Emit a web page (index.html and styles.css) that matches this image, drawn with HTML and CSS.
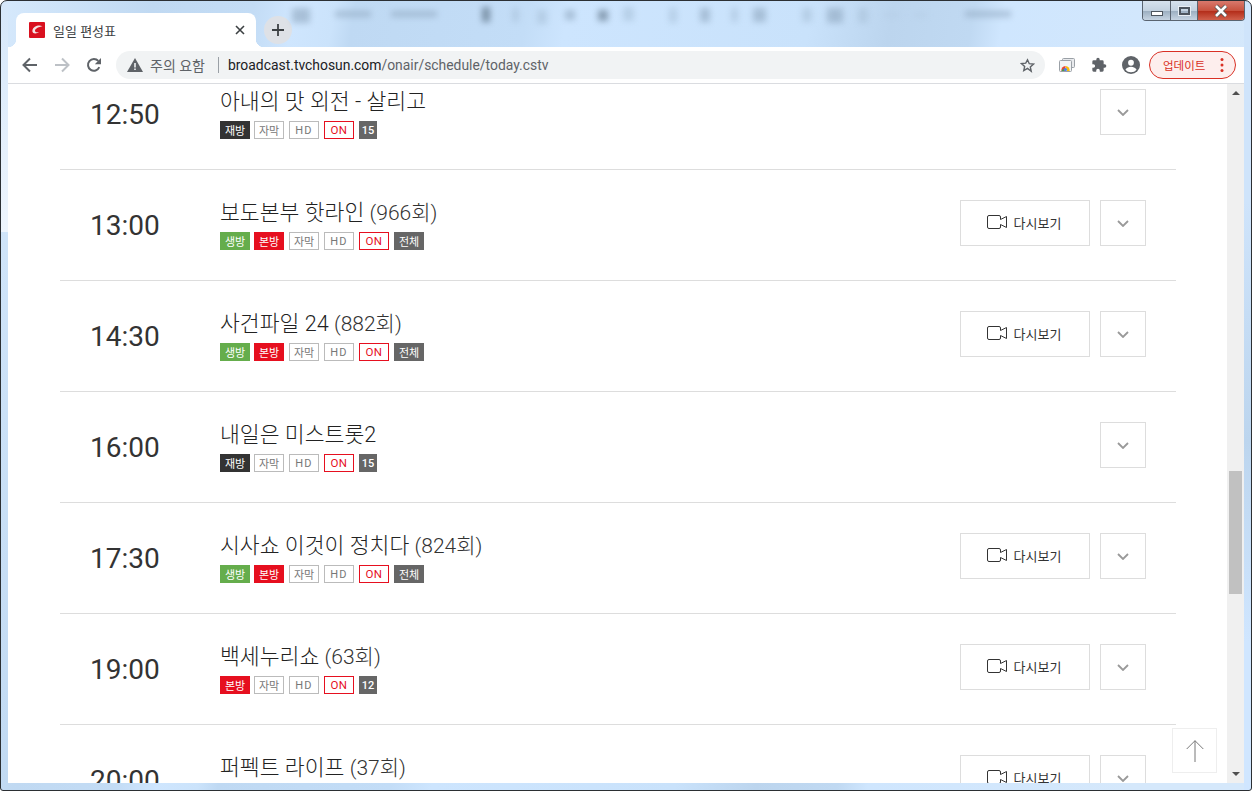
FILE: index.html
```html
<!DOCTYPE html>
<html lang="ko">

<head>
    <meta charset="UTF-8">
    <title>일일 편성표</title>
    <link rel="stylesheet" href="styles.css">
</head>

<body>
    <div class="window">
        <div class="blur-strip"></div>

        <div class="win-controls">
            <div class="win-btn win-min"><span></span></div>
            <div class="win-btn win-max"><span></span></div>
            <div class="win-btn win-close">
                <svg width="18" height="14" viewBox="0 0 18 14">
                    <path d="M4 2l10 10M14 2L4 12" stroke="#555" stroke-width="4.4" fill="none" />
                    <path d="M4 2l10 10M14 2L4 12" stroke="#fff" stroke-width="2.6" fill="none" />
                </svg>
            </div>
        </div>

        <div class="tab-strip">
            <div class="tab">
                <svg class="favicon" width="16" height="16" viewBox="0 0 16 16">
                    <rect width="16" height="16" rx="1" fill="#d9101f" />
                    <path d="M13.5 4.2C10 2.4 4.2 4 3.4 8.4 2.9 11.400 6.800 12.800 10.500 9.800 8 10.800 5.800 10.300 6 8.500 6.300 6.300 10 4.900 13.500 4.200Z" fill="#f3e3e3" />
                </svg>
                <span class="tab-title">일일 편성표</span>
                <svg class="tab-close" width="10" height="10" viewBox="0 0 10 10">
                    <path d="M1 1l8 8M9 1L1 9" stroke="#3c4043" stroke-width="1.600" />
                </svg>
            </div>
            <div class="new-tab">
                <svg width="14" height="14" viewBox="0 0 14 14">
                    <path d="M7 1v12M1 7h12" stroke="#3c4043" stroke-width="1.800" />
                </svg>
            </div>
        </div>

        <div class="toolbar">
            <svg class="tool back" width="16" height="16" viewBox="0 0 16 16">
                <path d="M15 8H2M8 1.500L1.500 8 8 14.500" stroke="#5f6368" stroke-width="2" fill="none" />
            </svg>
            <svg class="tool forward" width="16" height="16" viewBox="0 0 16 16">
                <path d="M1 8h13M8 1.500L14.500 8 8 14.500" stroke="#bdc1c6" stroke-width="2" fill="none" />
            </svg>
            <svg class="tool reload" width="16" height="16" viewBox="0 0 16 16">
                <path d="M13.300 10.200A5.900 5.900 0 1 1 12.300 3.900" stroke="#5f6368" stroke-width="2" fill="none" />
                <path d="M15 1v6.200H8.800z" fill="#5f6368" />
            </svg>

            <div class="omnibox">
                <svg class="warn" width="16" height="14" viewBox="0 0 16 14">
                    <path d="M8 0L16 14H0z" fill="#5f6368" />
                    <path d="M7.200 5h1.600v4.500H7.200zM7.200 10.500h1.600V12H7.200z" fill="#f1f3f4" />
                </svg>
                <span class="warn-text">주의 요함</span>
                <span class="omni-sep"></span>
                <span class="url">broadcast.tvchosun.com<span class="url-path">/onair/schedule/today.cstv</span></span>
                <svg class="star" width="15" height="15" viewBox="0 0 24 24">
                    <path d="M12 2.800l2.800 6.300 6.900.7-5.200 4.600 1.500 6.800L12 16.700l-6 3.500 1.500-6.800-5.200-4.600 6.900-.7z" stroke="#5f6368" stroke-width="2.200" fill="none" />
                </svg>
            </div>

            <svg class="ext-cast" width="16" height="14" viewBox="0 0 16 14">
                <rect x="3.500" y="0.500" width="12" height="9" rx="1" fill="#e8eaed" stroke="#9aa0a6" />
                <rect x="0.500" y="2.500" width="12" height="11" rx="1" fill="#f1f3f4" stroke="#9aa0a6" />
                <path d="M2.500 13a4 4 0 0 1 4-5v5z" fill="#ea4335" />
                <path d="M6.500 8a4 4 0 0 1 4 5H8z" fill="#fbbc04" />
                <path d="M2.500 13h2l1-1-1-1.500z" fill="#34a853" />
                <circle cx="6.500" cy="11.500" r="1.600" fill="#4285f4" />
            </svg>
            <svg class="ext-puzzle" width="16" height="16" viewBox="0 0 24 24">
                <path d="M20.500 11H19V7a2 2 0 0 0-2-2h-4V3.500a2.500 2.500 0 0 0-5 0V5H4a2 2 0 0 0-2 2v3.800h1.500a2.700 2.700 0 0 1 0 5.400H2V20a2 2 0 0 0 2 2h3.800v-1.500a2.700 2.700 0 0 1 5.400 0V22H17a2 2 0 0 0 2-2v-4h1.500a2.500 2.500 0 0 0 0-5z" fill="#5f6368" />
            </svg>
            <svg class="profile" width="18" height="18" viewBox="0 0 20 20">
                <circle cx="10" cy="10" r="10" fill="#5f6368" />
                <circle cx="10" cy="7.500" r="3.200" fill="#fff" />
                <path d="M3.800 15.200c1.500-2.400 3.900-3.300 6.200-3.300s4.700.9 6.200 3.300A8 8 0 0 1 10 18a8 8 0 0 1-6.200-2.800z" fill="#fff" />
            </svg>
            <div class="update-btn">
                <span>업데이트</span>
                <svg width="4" height="16" viewBox="0 0 4 16">
                    <circle cx="2" cy="2.500" r="1.500" fill="#d93025" />
                    <circle cx="2" cy="8" r="1.500" fill="#d93025" />
                    <circle cx="2" cy="13.500" r="1.500" fill="#d93025" />
                </svg>
            </div>
        </div>

        <div class="viewport">
            <div class="page">
                <ul class="schedule">
                    <li class="row">
                        <div class="time">12:50</div>
                        <div class="info">
                            <div class="title">아내의 맛 외전 - 살리고</div>
                            <div class="badges">
                                <span class="badge dark">재방</span>
                                <span class="badge line">자막</span>
                                <span class="badge line en">HD</span>
                                <span class="badge on">ON</span>
                                <span class="badge age">15</span>
                            </div>
                        </div>
                        <div class="actions">
                            <a class="more"><svg width="12" height="7" viewBox="0 0 12 7"><path d="M1 1l5 5 5-5" stroke="#999" stroke-width="1.800" fill="none" /></svg></a>
                        </div>
                    </li>
                    <li class="row">
                        <div class="time">13:00</div>
                        <div class="info">
                            <div class="title">보도본부 핫라인 <span class="count">(966회)</span></div>
                            <div class="badges">
                                <span class="badge live">생방</span>
                                <span class="badge first">본방</span>
                                <span class="badge line">자막</span>
                                <span class="badge line en">HD</span>
                                <span class="badge on">ON</span>
                                <span class="badge all">전체</span>
                            </div>
                        </div>
                        <div class="actions">
                            <a class="replay"><svg width="20" height="14" viewBox="0 0 20 14"><path d="M2 .5h10a1.500 1.500 0 0 1 1.500 1.500v2.500l6-3v11l-6-3V12a1.500 1.500 0 0 1-1.500 1.500H2A1.500 1.500 0 0 1 .5 12V2A1.500 1.500 0 0 1 2 .5z" stroke="#333" fill="none" /></svg>다시보기</a>
                            <a class="more"><svg width="12" height="7" viewBox="0 0 12 7"><path d="M1 1l5 5 5-5" stroke="#999" stroke-width="1.800" fill="none" /></svg></a>
                        </div>
                    </li>
                    <li class="row">
                        <div class="time">14:30</div>
                        <div class="info">
                            <div class="title">사건파일 24 <span class="count">(882회)</span></div>
                            <div class="badges">
                                <span class="badge live">생방</span>
                                <span class="badge first">본방</span>
                                <span class="badge line">자막</span>
                                <span class="badge line en">HD</span>
                                <span class="badge on">ON</span>
                                <span class="badge all">전체</span>
                            </div>
                        </div>
                        <div class="actions">
                            <a class="replay"><svg width="20" height="14" viewBox="0 0 20 14"><path d="M2 .5h10a1.500 1.500 0 0 1 1.500 1.500v2.500l6-3v11l-6-3V12a1.500 1.500 0 0 1-1.500 1.500H2A1.500 1.500 0 0 1 .5 12V2A1.500 1.500 0 0 1 2 .5z" stroke="#333" fill="none" /></svg>다시보기</a>
                            <a class="more"><svg width="12" height="7" viewBox="0 0 12 7"><path d="M1 1l5 5 5-5" stroke="#999" stroke-width="1.800" fill="none" /></svg></a>
                        </div>
                    </li>
                    <li class="row">
                        <div class="time">16:00</div>
                        <div class="info">
                            <div class="title">내일은 미스트롯2</div>
                            <div class="badges">
                                <span class="badge dark">재방</span>
                                <span class="badge line">자막</span>
                                <span class="badge line en">HD</span>
                                <span class="badge on">ON</span>
                                <span class="badge age">15</span>
                            </div>
                        </div>
                        <div class="actions">
                            <a class="more"><svg width="12" height="7" viewBox="0 0 12 7"><path d="M1 1l5 5 5-5" stroke="#999" stroke-width="1.800" fill="none" /></svg></a>
                        </div>
                    </li>
                    <li class="row">
                        <div class="time">17:30</div>
                        <div class="info">
                            <div class="title">시사쇼 이것이 정치다 <span class="count">(824회)</span></div>
                            <div class="badges">
                                <span class="badge live">생방</span>
                                <span class="badge first">본방</span>
                                <span class="badge line">자막</span>
                                <span class="badge line en">HD</span>
                                <span class="badge on">ON</span>
                                <span class="badge all">전체</span>
                            </div>
                        </div>
                        <div class="actions">
                            <a class="replay"><svg width="20" height="14" viewBox="0 0 20 14"><path d="M2 .5h10a1.500 1.500 0 0 1 1.500 1.500v2.500l6-3v11l-6-3V12a1.500 1.500 0 0 1-1.500 1.500H2A1.500 1.500 0 0 1 .5 12V2A1.500 1.500 0 0 1 2 .5z" stroke="#333" fill="none" /></svg>다시보기</a>
                            <a class="more"><svg width="12" height="7" viewBox="0 0 12 7"><path d="M1 1l5 5 5-5" stroke="#999" stroke-width="1.800" fill="none" /></svg></a>
                        </div>
                    </li>
                    <li class="row">
                        <div class="time">19:00</div>
                        <div class="info">
                            <div class="title">백세누리쇼 <span class="count">(63회)</span></div>
                            <div class="badges">
                                <span class="badge first">본방</span>
                                <span class="badge line">자막</span>
                                <span class="badge line en">HD</span>
                                <span class="badge on">ON</span>
                                <span class="badge age">12</span>
                            </div>
                        </div>
                        <div class="actions">
                            <a class="replay"><svg width="20" height="14" viewBox="0 0 20 14"><path d="M2 .5h10a1.500 1.500 0 0 1 1.500 1.500v2.500l6-3v11l-6-3V12a1.500 1.500 0 0 1-1.500 1.500H2A1.500 1.500 0 0 1 .5 12V2A1.500 1.500 0 0 1 2 .5z" stroke="#333" fill="none" /></svg>다시보기</a>
                            <a class="more"><svg width="12" height="7" viewBox="0 0 12 7"><path d="M1 1l5 5 5-5" stroke="#999" stroke-width="1.800" fill="none" /></svg></a>
                        </div>
                    </li>
                    <li class="row">
                        <div class="time">20:00</div>
                        <div class="info">
                            <div class="title">퍼펙트 라이프 <span class="count">(37회)</span></div>
                        </div>
                        <div class="actions">
                            <a class="replay"><svg width="20" height="14" viewBox="0 0 20 14"><path d="M2 .5h10a1.500 1.500 0 0 1 1.500 1.500v2.500l6-3v11l-6-3V12a1.500 1.500 0 0 1-1.500 1.500H2A1.500 1.500 0 0 1 .5 12V2A1.500 1.500 0 0 1 2 .5z" stroke="#333" fill="none" /></svg>다시보기</a>
                            <a class="more"><svg width="12" height="7" viewBox="0 0 12 7"><path d="M1 1l5 5 5-5" stroke="#999" stroke-width="1.800" fill="none" /></svg></a>
                        </div>
                    </li>
                </ul>
            </div>

            <a class="to-top">
                <svg width="18" height="22" viewBox="0 0 18 22">
                    <path d="M9 .7V22M.7 9L9 .7 17.300 9" stroke="#777" fill="none" />
                </svg>
            </a>

            <div class="scrollbar">
                <div class="arrow-up"></div>
                <div class="thumb"></div>
                <div class="arrow-down"></div>
            </div>
        </div>
    </div>
</body>

</html>
```

FILE: styles.css
```css
html,
body {
    margin: 0;
    height: 100%;
    overflow: hidden;
}

body {
    font-family: Roboto, "Noto Sans CJK KR", sans-serif;
    color: #333;
}

ul {
    list-style: none;
    margin: 0;
    padding: 0;
}

.window {
    position: relative;
    width: 1252px;
    height: 791px;
    box-sizing: border-box;
    padding: 0 7px 7px;
    display: flex;
    flex-direction: column;
    border: 1px solid #2b2f33;
    border-radius: 7px 7px 3px 3px;
    background:
        linear-gradient(#d5e7fa, #eef5fd) 0 0 / 7px 231px no-repeat,
        linear-gradient(#cfe4fb 0, #cfe4fb 200px, #bcd5ee 440px, #d0e6ff 640px) right 0 / 7px 100% no-repeat,
        linear-gradient(100deg, #d6e9fc 0, #c0d9f2 150px, #c3dcf5 250px, #cfe6fe 290px, #cbe3fb 330px, #bfd9f3 350px, #c3ddf7 520px, #cde5fe 560px, #c9e2fb 800px, #bcd5ee 880px, #c0d9f2 960px, #cfe6fe 990px, #d5e8fb 1252px);
    overflow: hidden;
}

/* blurred desktop behind the glass title bar */
.blur-strip {
    position: absolute;
    top: 0;
    left: 280px;
    width: 740px;
    height: 30px;
    filter: blur(3px);
    opacity: .6;
    background:
        linear-gradient(#8fa7bf, #8fa7bf) 11px 7px / 18px 15px no-repeat,
        linear-gradient(#8fa7bf, #8fa7bf) 54px 10px / 36px 6px no-repeat,
        linear-gradient(#8fa7bf, #8fa7bf) 110px 10px / 46px 6px no-repeat,
        linear-gradient(#4d6275, #4d6275) 201px 6px / 8px 15px no-repeat,
        linear-gradient(#a9c2da, #a9c2da) 231px 7px / 7px 14px no-repeat,
        linear-gradient(#a9c2da, #a9c2da) 256px 9px / 10px 14px no-repeat,
        linear-gradient(#8fa7bf, #8fa7bf) 284px 9px / 10px 10px no-repeat,
        linear-gradient(#5a6f83, #5a6f83) 317px 9px / 10px 11px no-repeat,
        linear-gradient(#a9c2da, #a9c2da) 342px 6px / 11px 14px no-repeat,
        linear-gradient(#a9c2da, #a9c2da) 388px 7px / 8px 15px no-repeat,
        linear-gradient(#8fa7bf, #8fa7bf) 419px 7px / 10px 14px no-repeat,
        linear-gradient(#a9c2da, #a9c2da) 450px 7px / 7px 14px no-repeat,
        linear-gradient(#8fa7bf, #8fa7bf) 472px 7px / 13px 14px no-repeat,
        linear-gradient(#a9c2da, #a9c2da) 521px 7px / 10px 14px no-repeat,
        linear-gradient(#8fa7bf, #8fa7bf) 546px 7px / 16px 15px no-repeat,
        linear-gradient(#a9c2da, #a9c2da) 577px 7px / 10px 15px no-repeat,
        linear-gradient(#b3cbe3, #b3cbe3) 603px 12px / 15px 4px no-repeat,
        linear-gradient(#b3cbe3, #b3cbe3) 633px 12px / 13px 4px no-repeat,
        linear-gradient(#8fa7bf, #8fa7bf) 684px 10px / 46px 6px no-repeat;
}

.win-controls {
    position: absolute;
    top: 0;
    right: 6px;
    display: flex;
    height: 19px;
    border: 1px solid #5a6470;
    border-top: 0;
    border-radius: 0 0 4px 4px;
    overflow: hidden;
}

.win-btn {
    display: flex;
    align-items: center;
    justify-content: center;
    background: linear-gradient(#d6e2ee 0%, #c3d2e0 50%, #9aadbf 51%, #c6d4e2 100%);
    border-right: 1px solid #5a6470;
}

.win-min {
    width: 27px;
}

.win-min span {
    width: 10px;
    height: 3px;
    margin-top: 5px;
    background: #fff;
    border: 1px solid #4d555e;
}

.win-max {
    width: 26px;
}

.win-max span {
    width: 7px;
    height: 4px;
    border: 2px solid #4d555e;
    outline: 1px solid #e8eef4;
}

.win-close {
    width: 46px;
    border-right: 0;
    background: linear-gradient(#d8796d 0%, #c8523f 50%, #b22a17 51%, #d0604c 100%);
}

.tab-strip {
    height: 46px;
    display: flex;
    align-items: flex-start;
    flex-shrink: 0;
}

.tab {
    position: relative;
    width: 240px;
    height: 34px;
    margin-top: 12px;
    margin-left: 8px;
    padding: 0 11px 0 13px;
    box-sizing: border-box;
    display: flex;
    align-items: center;
    background: #fff;
    border-radius: 8px 8px 0 0;
}

/* flared bottom corners of the active tab */
.tab::before,
.tab::after {
    content: "";
    position: absolute;
    bottom: 0;
    width: 8px;
    height: 8px;
}

.tab::before {
    left: -8px;
    background: radial-gradient(circle at 0 0, transparent 8px, #fff 8.500px);
}

.tab::after {
    right: -8px;
    background: radial-gradient(circle at 100% 0, transparent 8px, #fff 8.500px);
}

.tab-title {
    flex: 1;
    margin-left: 8px;
    font-size: 13px;
    color: #3c4043;
}

.new-tab {
    width: 28px;
    height: 28px;
    margin: 15px 0 0 8px;
    border-radius: 50%;
    background: #dee1e6;
    display: flex;
    align-items: center;
    justify-content: center;
}

.toolbar {
    height: 36px;
    flex-shrink: 0;
    display: flex;
    align-items: center;
    background: #fff;
    border-bottom: 1px solid #dadce0;
}

.tool {
    flex-shrink: 0;
}

.back {
    margin-left: 14px;
}

.forward {
    margin-left: 16px;
}

.reload {
    margin-left: 16px;
}

.omnibox {
    width: 929px;
    height: 28px;
    margin-left: 14px;
    padding: 0 10px 0 11px;
    box-sizing: border-box;
    display: flex;
    align-items: center;
    border-radius: 14px;
    background: #f1f3f4;
    font-size: 14px;
    color: #5f6368;
}

.warn-text {
    margin-left: 7px;
    font-size: 14px;
}

.omni-sep {
    width: 1px;
    height: 16px;
    margin: 0 9px 0 13px;
    background: #9aa0a6;
}

.url {
    flex: 1;
    font-size: 13.900px;
    color: #202124;
}

.url-path {
    color: #5f6368;
}

.ext-cast {
    margin-left: 14px;
}

.ext-puzzle {
    margin-left: 16px;
}

.profile {
    margin-left: 15px;
}

.update-btn {
    width: 87px;
    height: 28px;
    margin-left: 9px;
    box-sizing: border-box;
    padding: 0 11px 0 13px;
    display: flex;
    align-items: center;
    justify-content: space-between;
    border: 1px solid #d93025;
    border-radius: 14px;
    background: #fdeeed;
    font-size: 11.500px;
    color: #d93025;
}

.viewport {
    position: relative;
    flex: 1;
    min-height: 0;
    background: #fff;
    overflow: hidden;
    display: flex;
}

.page {
    flex: 1;
    min-width: 0;
    padding: 0 51px 0 52px;
}

.schedule {
    margin-top: -25px;
}

.row {
    height: 111px;
    box-sizing: border-box;
    display: flex;
    border-bottom: 1px solid #ddd;
}

.time {
    width: 160px;
    flex-shrink: 0;
    padding-left: 30px;
    box-sizing: border-box;
    font-size: 28px;
    line-height: 112px;
}

.info {
    flex: 1;
    padding-top: 29px;
}

.title {
    font-size: 21.600px;
    line-height: 28px;
    font-weight: 300;
    color: #222;
}

.count {
    font-size: 21px;
    color: #333;
}

.badges {
    display: flex;
    margin-top: 5px;
}

.badge {
    width: 30px;
    height: 18px;
    box-sizing: border-box;
    margin-right: 5px;
    display: flex;
    align-items: center;
    justify-content: center;
    font-size: 11px;
    color: #fff;
}

.badge:first-child {
    margin-right: 4px;
}

.dark { background: #333; }
.live { background: #65ad4c; }
.first { background: #e60f1f; }
.all { background: #666; }

.age {
    width: 18px;
    background: #666;
    font-weight: 500;
}

.line {
    border: 1px solid #bbb;
    color: #777;
}

.en {
    letter-spacing: 1.200px;
}

.on {
    border: 1px solid #e60f1f;
    color: #e60f1f;
    font-size: 11.500px;
    letter-spacing: .4px;
}

.actions {
    display: flex;
    gap: 10px;
    padding-top: 30px;
    padding-right: 30px;
}

.replay,
.more {
    height: 46px;
    box-sizing: border-box;
    display: flex;
    align-items: center;
    justify-content: center;
    border: 1px solid #ddd;
    background: #fff;
}

.replay {
    width: 130px;
    gap: 7px;
    padding: 0 2px 2px 0;
    font-size: 13px;
}

.more {
    width: 46px;
}

.to-top {
    position: absolute;
    top: 644px;
    left: 1164px;
    width: 45px;
    height: 45px;
    box-sizing: border-box;
    display: flex;
    align-items: center;
    justify-content: center;
    border: 1px solid #eee;
    background: #fff;
}

.scrollbar {
    position: relative;
    width: 17px;
    flex-shrink: 0;
    background: #f0f0f0;
}

.arrow-up,
.arrow-down {
    position: absolute;
    left: 5px;
    width: 0;
    height: 0;
    border-left: 4px solid transparent;
    border-right: 4px solid transparent;
}

.arrow-up {
    top: 7px;
    border-bottom: 4px solid #505050;
}

.arrow-down {
    bottom: 7px;
    border-top: 4px solid #505050;
}

.thumb {
    position: absolute;
    top: 387px;
    left: 2px;
    width: 13px;
    height: 123px;
    background: #c1c1c1;
}
```
